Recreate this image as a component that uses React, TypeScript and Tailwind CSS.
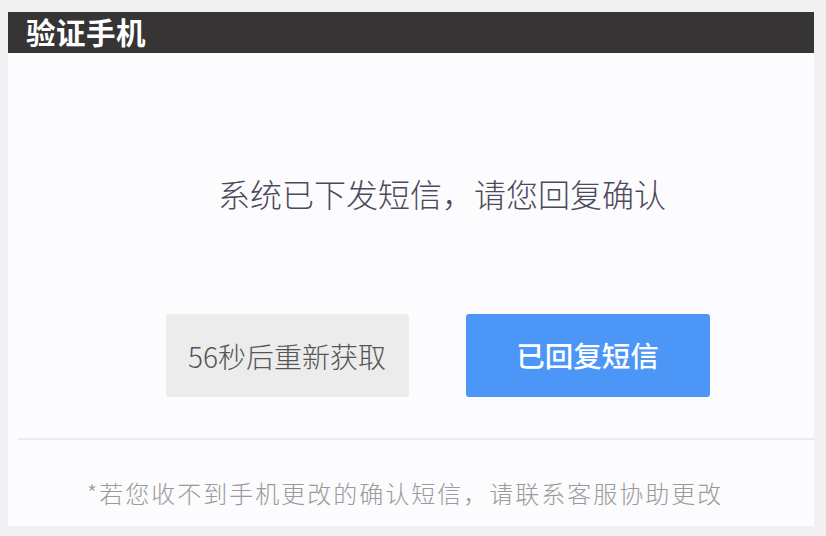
const cjk = { fontFamily: '"Noto Sans CJK SC", "Noto Sans", sans-serif' };

export default function App() {
  return (
    <div className="w-[826px] h-[536px] bg-[#f1f0f2] pt-[12px] pl-[8px]" style={cjk}>
      <div className="w-[806px] h-[514px] bg-[#fcfbfd] flex flex-col">
        <div className="h-[41px] bg-[#363435] flex items-center pl-[18px]">
          <h1 className="text-[29.5px] leading-none font-bold text-white tracking-[0.5px] -translate-y-[1px]">验证手机</h1>
        </div>

        <div className="h-[142px] flex items-end justify-center pl-[62px]">
          <p className="text-[32px] leading-none font-light text-[#4b4a5c] translate-y-[14px]">
            系统已下发短信，请您回复确认
          </p>
        </div>

        <div className="mt-[119px] flex justify-center gap-[57px] pl-[53px]">
          <button className="w-[243px] h-[83px] rounded-[3px] bg-[#ececec] text-[28px] font-light text-[#555]">
            56秒后重新获取
          </button>
          <button className="w-[244px] h-[83px] rounded-[3px] bg-[#4c96f7] text-[28.5px] font-medium text-white">
            已回复短信
          </button>
        </div>

        <div className="mt-[41px] ml-[10px] h-[2px] bg-[#ecebed]" />

        <div className="flex-1 flex items-center justify-center pr-[12px] pt-[20px]">
          <p className="text-[24px] leading-none font-light tracking-[2px] text-[#9a9a9a]">
            *若您收不到手机更改的确认短信，请联系客服协助更改
          </p>
        </div>
      </div>
    </div>
  );
}
